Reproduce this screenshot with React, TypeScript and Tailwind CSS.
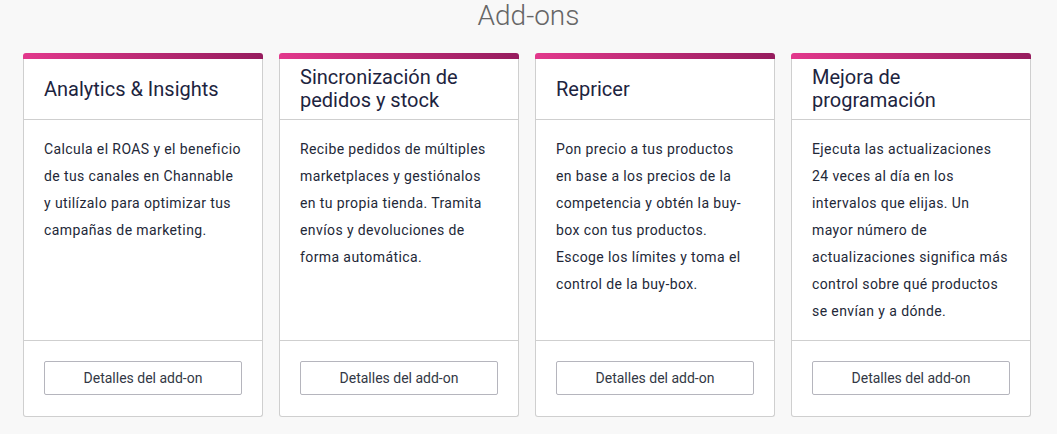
const addons = [
  {
    title: 'Analytics & Insights',
    lines: [
      'Calcula el ROAS y el beneficio',
      'de tus canales en Channable',
      'y utilízalo para optimizar tus',
      'campañas de marketing.',
    ],
  },
  {
    title: 'Sincronización de pedidos y stock',
    lines: [
      'Recibe pedidos de múltiples',
      'marketplaces y gestiónalos',
      'en tu propia tienda. Tramita',
      'envíos y devoluciones de',
      'forma automática.',
    ],
  },
  {
    title: 'Repricer',
    lines: [
      'Pon precio a tus productos',
      'en base a los precios de la',
      'competencia y obtén la buy-',
      'box con tus productos.',
      'Escoge los límites y toma el',
      'control de la buy-box.',
    ],
  },
  {
    title: 'Mejora de programación',
    lines: [
      'Ejecuta las actualizaciones',
      '24 veces al día en los',
      'intervalos que elijas. Un',
      'mayor número de',
      'actualizaciones significa más',
      'control sobre qué productos',
      'se envían y a dónde.',
    ],
  },
]

export default function App() {
  return (
    <div className="min-h-screen bg-[#f8f8f8] font-['Roboto',sans-serif] px-[23px]">
      <h1 className="h-[53px] text-center text-[28px] leading-[32px] font-light text-[#666]">
        Add-ons
      </h1>
      <div className="grid grid-cols-4 gap-4 w-[1008px]">
        {addons.map((a) => (
          <div key={a.title} className="flex flex-col h-[364px]">
            <div className="h-[6px] rounded-t-[3px] bg-gradient-to-r from-[#e2388c] to-[#961c5e]" />
            <div className="flex-1 flex flex-col bg-white border border-t-0 border-[#cfcfcf] rounded-b-[3px]">
              <div className="h-[61px] flex items-center px-5 border-b border-[#cfcfcf]">
                <h2 className="text-[20px] leading-[23px] text-[#1d2440]">{a.title}</h2>
              </div>
              <div className="flex-1 pl-5 pr-1 pt-[16px] border-b border-[#cfcfcf]">
                {a.lines.map((l) => (
                  <p
                    key={l}
                    className="whitespace-nowrap text-[14px] leading-[27px] tracking-[0.4px] text-[#232838]"
                  >
                    {l}
                  </p>
                ))}
              </div>
              <div className="h-[75px] px-5 pt-5">
                <button
                  type="button"
                  className="w-[198px] h-[34px] border border-[#b5b5bd] rounded-[2px] bg-white text-[14px] text-[#333845]"
                >
                  Detalles del add-on
                </button>
              </div>
            </div>
          </div>
        ))}
      </div>
    </div>
  )
}
